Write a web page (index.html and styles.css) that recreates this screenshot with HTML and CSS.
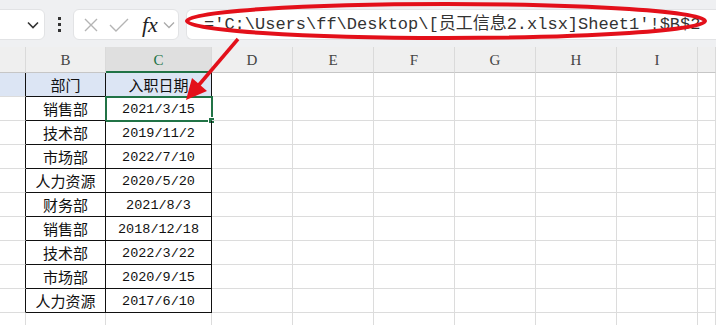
FILE: index.html
```html
<!DOCTYPE html>
<html lang="zh-CN">
  <head>
    <meta charset="UTF-8" />
    <title>引用其他工作簿</title>
    <link rel="stylesheet" href="styles.css">
  </head>
  <body>
    <div class="toolbar">
      <div class="name-box">
        <svg class="chevron" width="12" height="8" viewBox="0 0 12 8"><path d="M1 1.5 L6 6.5 L11 1.5" fill="none" stroke="#333" stroke-width="1.6"/></svg>
      </div>
      <div class="dots"><span></span><span></span><span></span></div>
      <div class="fn-box">
        <svg width="16" height="16" viewBox="0 0 16 16"><path d="M2 2 L14 14 M14 2 L2 14" stroke="#b4b4b4" stroke-width="1.4"/></svg>
        <svg width="22" height="16" viewBox="0 0 22 16"><path d="M2 8 L8 14 L20 2" fill="none" stroke="#b4b4b4" stroke-width="1.4"/></svg>
        <span class="fx">fx</span>
        <svg width="12" height="8" viewBox="0 0 12 8"><path d="M1 1.5 L6 6.5 L11 1.5" fill="none" stroke="#aaa" stroke-width="1.3"/></svg>
      </div>
      <div class="formula">='C:\Users\ff\Desktop\[员工信息2.xlsx]Sheet1'!$B$2</div>
    </div>

    <div class="sheet">
      <div class="hd"></div><div class="hd">B</div><div class="hd active">C</div><div class="hd">D</div><div class="hd">E</div><div class="hd">F</div><div class="hd">G</div><div class="hd">H</div><div class="hd">I</div><div class="hd"></div>

      <div class="c a hl"></div><div class="c t hl cn">部门</div><div class="c t hl cn">入职日期</div><div class="c"></div><div class="c"></div><div class="c"></div><div class="c"></div><div class="c"></div><div class="c"></div><div class="c"></div>
      <div class="c a"></div><div class="c t cn">销售部</div><div class="c t num sel">2021/3/15</div><div class="c"></div><div class="c"></div><div class="c"></div><div class="c"></div><div class="c"></div><div class="c"></div><div class="c"></div>
      <div class="c a"></div><div class="c t cn">技术部</div><div class="c t num">2019/11/2</div><div class="c"></div><div class="c"></div><div class="c"></div><div class="c"></div><div class="c"></div><div class="c"></div><div class="c"></div>
      <div class="c a"></div><div class="c t cn">市场部</div><div class="c t num">2022/7/10</div><div class="c"></div><div class="c"></div><div class="c"></div><div class="c"></div><div class="c"></div><div class="c"></div><div class="c"></div>
      <div class="c a"></div><div class="c t cn">人力资源</div><div class="c t num">2020/5/20</div><div class="c"></div><div class="c"></div><div class="c"></div><div class="c"></div><div class="c"></div><div class="c"></div><div class="c"></div>
      <div class="c a"></div><div class="c t cn">财务部</div><div class="c t num">2021/8/3</div><div class="c"></div><div class="c"></div><div class="c"></div><div class="c"></div><div class="c"></div><div class="c"></div><div class="c"></div>
      <div class="c a"></div><div class="c t cn">销售部</div><div class="c t num">2018/12/18</div><div class="c"></div><div class="c"></div><div class="c"></div><div class="c"></div><div class="c"></div><div class="c"></div><div class="c"></div>
      <div class="c a"></div><div class="c t cn">技术部</div><div class="c t num">2022/3/22</div><div class="c"></div><div class="c"></div><div class="c"></div><div class="c"></div><div class="c"></div><div class="c"></div><div class="c"></div>
      <div class="c a"></div><div class="c t cn">市场部</div><div class="c t num">2020/9/15</div><div class="c"></div><div class="c"></div><div class="c"></div><div class="c"></div><div class="c"></div><div class="c"></div><div class="c"></div>
      <div class="c a"></div><div class="c t cn">人力资源</div><div class="c t num">2017/6/10</div><div class="c"></div><div class="c"></div><div class="c"></div><div class="c"></div><div class="c"></div><div class="c"></div><div class="c"></div>
      <div class="c"></div><div class="c"></div><div class="c"></div><div class="c"></div><div class="c"></div><div class="c"></div><div class="c"></div><div class="c"></div><div class="c"></div><div class="c"></div>
    </div>

    <!-- red annotation drawn over the screenshot -->
    <svg class="markup" width="716" height="325" viewBox="0 0 716 325">
      <ellipse cx="446" cy="21" rx="259" ry="17" fill="none" stroke="#e3101a" stroke-width="4"/>
      <line x1="238" y1="39" x2="198" y2="86" stroke="#e3101a" stroke-width="3.5"/>
      <polygon points="186,100 192,78 207,91" fill="#e3101a"/>
    </svg>
  </body>
</html>
```

FILE: styles.css
```css
body {
  margin: 0;
  width: 716px;
  height: 325px;
  overflow: hidden;
  background: #fff;
  font-family: "Liberation Sans", "Noto Sans CJK SC", sans-serif;
  position: relative;
}
.toolbar {
  height: 47px;
  background: #eff0f2;
  display: flex;
  align-items: center;
  gap: 7px;
  padding-top: 2px;
  box-sizing: border-box;
}
.name-box {
  width: 53px;
  height: 31px;
  margin-left: -8px;
  background: #fff;
  border: 1px solid #e2e3e5;
  border-radius: 6px;
  display: flex;
  align-items: center;
  justify-content: flex-end;
  padding-right: 5px;
  box-sizing: border-box;
}
.dots {
  width: 14px;
  display: flex;
  flex-direction: column;
  align-items: center;
  gap: 3px;
}
.dots span {
  width: 3px;
  height: 3px;
  background: #333;
}
.fn-box {
  width: 106px;
  height: 31px;
  background: #fff;
  border: 1px solid #e2e3e5;
  border-radius: 6px;
  display: flex;
  align-items: center;
  gap: 9px;
  padding-left: 9px;
  box-sizing: border-box;
}
.fx {
  font-family: "Liberation Serif", serif;
  font-style: italic;
  font-size: 22px;
  color: #222;
  margin-left: 3px;
  margin-right: -4px;
}
.formula {
  flex: 1;
  min-width: 0;
  height: 31px;
  background: #fff;
  border: 1px solid #e2e3e5;
  border-right: none;
  border-radius: 6px 0 0 6px;
  padding-left: 17px;
  box-sizing: border-box;
  font-family: "Liberation Mono", "Noto Sans CJK SC", monospace;
  font-size: 17px;
  line-height: 29px;
  color: #333;
  white-space: nowrap;
  overflow: hidden;
}
.sheet {
  display: grid;
  grid-template-columns: 26px 80px 106px repeat(6, 81px) 18px;
  grid-template-rows: 26px repeat(11, 24px);
}
.hd {
  background: #efefef;
  border-right: 1px solid #dadada;
  border-bottom: 1px solid #c6c6c6;
  font-family: "Liberation Serif", serif;
  font-size: 15px;
  color: #444;
  display: flex;
  align-items: center;
  justify-content: center;
  box-sizing: border-box;
  padding-top: 2px;
}
.hd.active {
  background: #dfdfdf;
  color: #217346;
  border-bottom: 2px solid #217346;
}
.c {
  border-right: 1px solid #dcdcdc;
  border-bottom: 1px solid #dcdcdc;
  box-sizing: border-box;
  display: flex;
  align-items: center;
  justify-content: center;
  color: #111;
  position: relative;
}
.c.a {
  border-right-color: #111;
}
.c.t {
  border-right-color: #111;
  border-bottom-color: #111;
}
.c.hl {
  background: #dce5f4;
}
.cn {
  font-family: "Noto Sans CJK SC", sans-serif;
  font-size: 15px;
}
.num {
  font-family: "Liberation Mono", monospace;
  font-size: 13.5px;
  padding-top: 2px;
}
.sel {
  outline: 2px solid #217346;
  outline-offset: -1px;
}
.sel::after {
  content: "";
  position: absolute;
  right: -4px;
  bottom: -4px;
  width: 5px;
  height: 5px;
  background: #217346;
  border: 1px solid #fff;
}
.markup {
  position: absolute;
  left: 0;
  top: 0;
  pointer-events: none;
}
```
